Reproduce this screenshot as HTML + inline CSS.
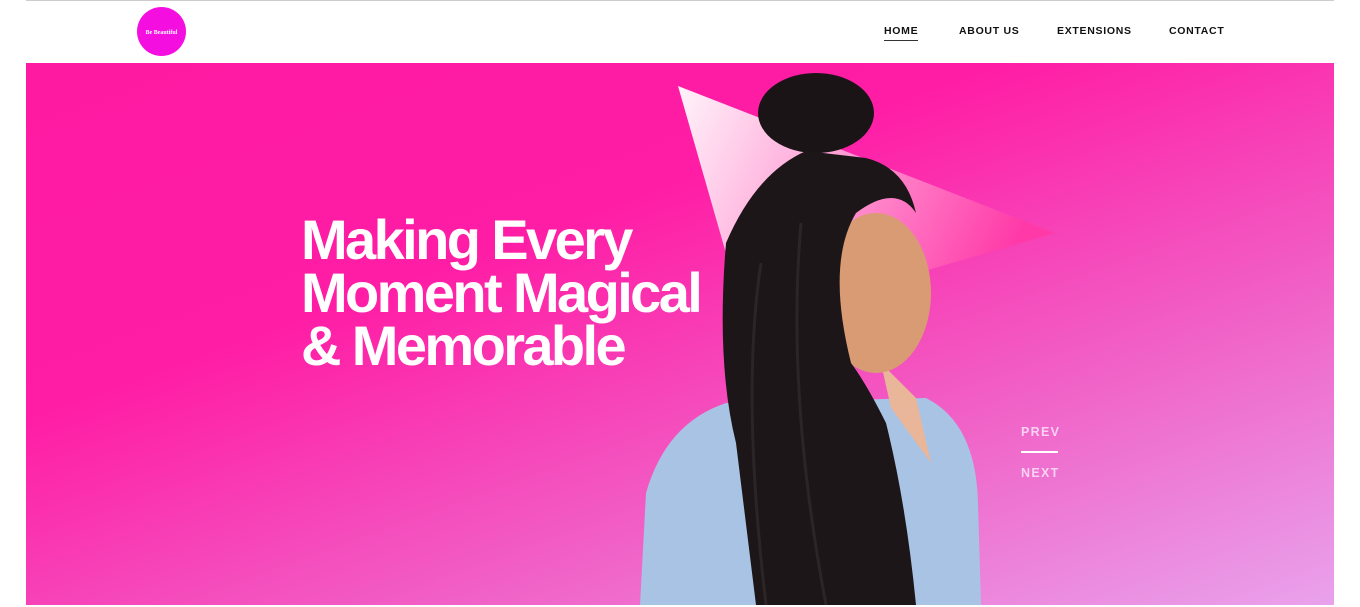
<!DOCTYPE html>
<html><head><style>
body{margin:0;width:1360px;height:607px;background:#fff;overflow:hidden;position:relative;font-family:"Liberation Sans",sans-serif}
.top{position:absolute;left:26px;top:0;width:1308px;height:1px;background:#ccc}
.logo{position:absolute;left:137px;top:7px;width:49px;height:49px;border-radius:50%;background:#f40fe0;color:#fff;font:bold 6px "Liberation Serif",serif;text-align:center;line-height:52px}
nav a{position:absolute;top:25px;font-weight:bold;font-size:10.5px;letter-spacing:0.7px;color:#111;text-decoration:none}
.hero{position:absolute;left:26px;top:63px;width:1308px;height:542px;background:linear-gradient(160deg,#ff1aa2 0%,#ff1da5 35%,#f064c8 70%,#e9a2ec 100%);overflow:hidden}
h1{position:absolute;left:275px;top:150px;margin:0;color:#fff;font-size:56px;line-height:53px;font-weight:900;letter-spacing:-2.6px}
.pn{position:absolute;left:995px;color:#f8d2f0;font-weight:bold;font-size:12.5px;letter-spacing:1.3px}
</style></head><body>
<div class="top"></div>
<div class="logo">Be Beautiful</div>
<nav><a style="left:884px;border-bottom:1px solid #333;padding-bottom:3px">HOME</a><a style="left:959px">ABOUT US</a><a style="left:1057px">EXTENSIONS</a><a style="left:1169px">CONTACT</a></nav>
<div class="hero">
<svg width="1308" height="542" style="position:absolute;left:0;top:0">
<defs><linearGradient id="t" x1="0" y1="0" x2="1" y2="0.3"><stop offset="0" stop-color="#fff" stop-opacity=".95"/><stop offset="1" stop-color="#ff3aa8"/></linearGradient></defs>
<polygon points="652,23 1029,170 720,260" fill="url(#t)"/>
<path d="M614,542 L620,430 Q640,360 700,340 L900,335 Q950,360 952,440 L955,542Z" fill="#a9c3e4"/>
<path d="M855,300 L865,345 L905,400 L890,335Z" fill="#e9b69a"/>
<ellipse cx="850" cy="230" rx="55" ry="80" fill="#d99b74"/>
<ellipse cx="790" cy="50" rx="58" ry="40" fill="#1a1416"/>
<path d="M780,88 Q730,110 700,180 Q690,300 710,380 L730,542 L890,542 Q880,440 860,360 Q840,320 825,300 Q800,200 830,150 Q870,120 890,150 Q880,105 840,95Z" fill="#1d1618"/>
<path d="M735,200 Q715,330 740,542" stroke="#2c2426" stroke-width="3" fill="none"/>
<path d="M775,160 Q760,330 800,542" stroke="#2c2426" stroke-width="3" fill="none"/>
</svg>
<h1>Making Every<br>Moment Magical<br>&amp; Memorable</h1>
<div class="pn" style="top:362px">PREV</div>
<div style="position:absolute;left:995px;top:388px;width:37px;height:2px;background:#fff"></div>
<div class="pn" style="top:403px">NEXT</div>
</div>
</body></html>
